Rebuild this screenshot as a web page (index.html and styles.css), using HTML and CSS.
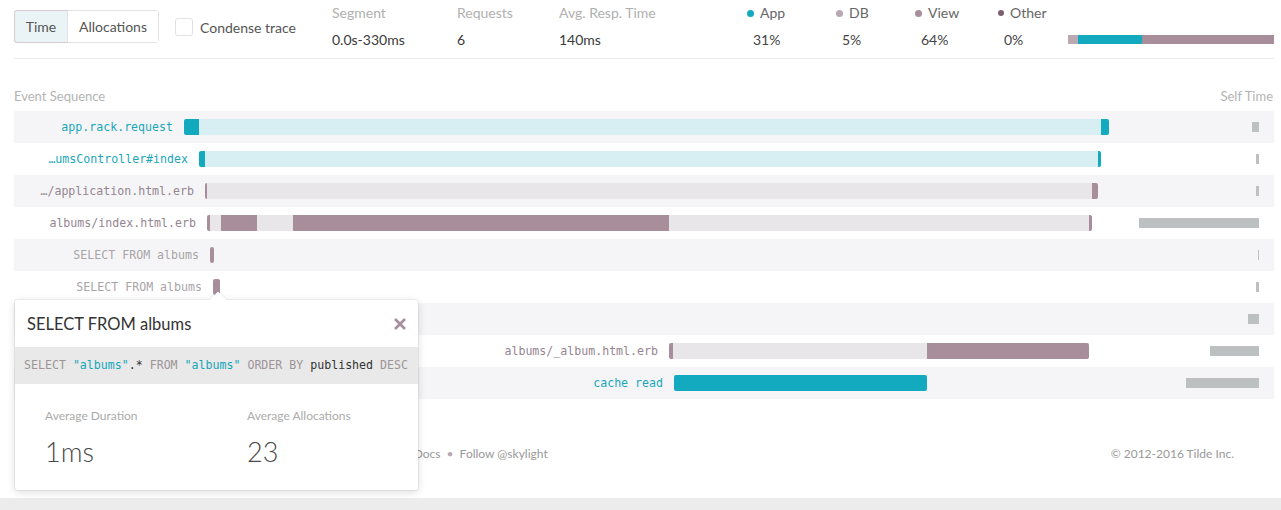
FILE: index.html
```html
<!DOCTYPE html>
<html>
<head>
<meta charset="utf-8">
<link rel="stylesheet" href="styles.css">
</head>
<body>
<div class="page">
  <div class="topbar">
    <div class="seg-group">
      <button class="seg active">Time</button>
      <button class="seg">Allocations</button>
    </div>
    <label class="condense"><span class="box"></span>Condense trace</label>
    <div class="stat w-seg"><div class="k">Segment</div><div class="v">0.0s-330ms</div></div>
    <div class="stat w-req"><div class="k">Requests</div><div class="v">6</div></div>
    <div class="stat w-avg"><div class="k">Avg. Resp. Time</div><div class="v">140ms</div></div>
    <div class="stat leg w-app"><div class="k"><i class="dot d-app"></i>App</div><div class="v">31%</div></div>
    <div class="stat leg w-db"><div class="k"><i class="dot d-db"></i>DB</div><div class="v">5%</div></div>
    <div class="stat leg w-view"><div class="k"><i class="dot d-view"></i>View</div><div class="v">64%</div></div>
    <div class="stat leg w-other"><div class="k"><i class="dot d-other"></i>Other</div><div class="v">0%</div></div>
    <div class="mix">
      <span class="mx db" style="width:10px"></span><span class="mx app" style="width:64px"></span><span class="mx view" style="width:132px"></span>
    </div>
  </div>

  <div class="seq-head"><span>Event Sequence</span><span>Self Time</span></div>

  <div class="rows">
    <div class="row alt">
      <div class="lbl c-app" style="width:170px">app.rack.request</div>
      <div class="bar"><span class="s app" style="width:15px"></span><span class="s app-l" style="width:902px"></span><span class="s app" style="width:8px"></span></div>
      <div class="self"><span class="sb" style="width:7px"></span></div>
    </div>
    <div class="row">
      <div class="lbl c-app" style="width:185px">…umsController#index</div>
      <div class="bar"><span class="s app" style="width:6px"></span><span class="s app-l" style="width:893px"></span><span class="s app" style="width:3px"></span></div>
      <div class="self"><span class="sb" style="width:3px"></span></div>
    </div>
    <div class="row alt">
      <div class="lbl c-view" style="width:191px">…/application.html.erb</div>
      <div class="bar"><span class="s view" style="width:2px"></span><span class="s view-l" style="width:885px"></span><span class="s view" style="width:6px"></span></div>
      <div class="self"><span class="sb" style="width:3px"></span></div>
    </div>
    <div class="row">
      <div class="lbl c-view" style="width:193px">albums/index.html.erb</div>
      <div class="bar"><span class="s view" style="width:3px"></span><span class="s view-l" style="width:11px"></span><span class="s view" style="width:36px"></span><span class="s view-l" style="width:36px"></span><span class="s view" style="width:376px"></span><span class="s view-l" style="width:420px"></span><span class="s view" style="width:3px"></span></div>
      <div class="self"><span class="sb" style="width:120px"></span></div>
    </div>
    <div class="row alt">
      <div class="lbl c-db" style="width:196px">SELECT FROM albums</div>
      <div class="bar"><span class="s view" style="width:4px"></span></div>
      <div class="self"><span class="sb" style="width:1px"></span></div>
    </div>
    <div class="row">
      <div class="lbl c-db" style="width:199px">SELECT FROM albums</div>
      <div class="bar"><span class="s view" style="width:7px"></span></div>
      <div class="self"><span class="sb" style="width:3px"></span></div>
    </div>
    <div class="row alt">
      <div class="lbl c-view" style="width:206px"></div>
      <div class="bar"><span class="s view" style="width:4px"></span></div>
      <div class="self"><span class="sb" style="width:11px"></span></div>
    </div>
    <div class="row">
      <div class="lbl c-view" style="width:655px">albums/_album.html.erb</div>
      <div class="bar"><span class="s view" style="width:4px"></span><span class="s view-l" style="width:254px"></span><span class="s view" style="width:162px"></span></div>
      <div class="self"><span class="sb" style="width:49px"></span></div>
    </div>
    <div class="row alt">
      <div class="lbl c-app" style="width:660px">cache read</div>
      <div class="bar"><span class="s app" style="width:253px"></span></div>
      <div class="self"><span class="sb" style="width:73px"></span></div>
    </div>
  </div>

  <div class="footer">
    <div class="links">Blog <b>•</b> Support <b>•</b> Docs <b>•</b> Follow @skylight</div>
    <div class="copy">© 2012-2016 Tilde Inc.</div>
  </div>

  <div class="popup">
    <div class="arrow"></div>
    <div class="p-head">
      <span class="p-title">SELECT FROM albums</span>
      <svg class="close" width="14" height="14" viewBox="0 0 14 14"><path d="M2 2 L12 12 M12 2 L2 12" stroke="#a88e9b" stroke-width="2.6" stroke-linecap="butt"/></svg>
    </div>
    <div class="sql"><span class="kw">SELECT</span> <span class="str">"albums"</span>.* <span class="kw">FROM</span> <span class="str">"albums"</span> <span class="kw">ORDER BY</span> published <span class="kw">DESC</span></div>
    <div class="p-stats">
      <div class="p-stat first"><div class="pk">Average Duration</div><div class="pv">1ms</div></div>
      <div class="p-stat"><div class="pk">Average Allocations</div><div class="pv">23</div></div>
    </div>
  </div>
</div>
<div class="band"></div>
</body>
</html>
```

FILE: styles.css
```css
* { box-sizing: border-box; }
html, body { margin: 0; padding: 0; background: #fff; }
body {
  font-family: Lato, "Noto Sans", sans-serif;
  font-size: 14px;
  color: #444;
  width: 1281px;
  height: 510px;
  overflow: hidden;
}
.page {
  position: relative;
  width: 1260px;
  margin-left: 14px;
  height: 498px;
}

/* top bar */
.topbar {
  display: flex;
  align-items: flex-start;
  height: 59px;
  border-bottom: 1px solid #ebebeb;
}
.seg-group {
  display: flex;
  margin-top: 10px;
  height: 33px;
  border: 1px solid #e3e3e3;
  border-radius: 3px;
}
.seg {
  font: inherit;
  font-size: 14px;
  color: #555;
  background: #fff;
  border: 0;
  height: 31px;
  padding: 0;
  margin: 0;
}
.seg:first-child { border-radius: 2px 0 0 2px; }
.seg.active {
  background: #eaf4f6;
  outline: 1px solid #d9c9d1;
  width: 52px;
}
.seg + .seg { border-left: 1px solid #e3e3e3; width: 91px; }
.condense {
  display: flex;
  align-items: center;
  margin-top: 18px;
  margin-left: 16px;
  height: 18px;
  color: #555;
  width: 157px;
}
.box {
  width: 18px;
  height: 18px;
  border: 1px solid #e1e1e1;
  border-radius: 3px;
  margin-right: 7px;
  background: #fff;
}
.stat { padding-top: 5px; }
.stat .k { height: 16px; line-height: 16px; color: #b0b0b0; white-space: nowrap; }
.stat .v { margin-top: 11px; height: 16px; line-height: 16px; color: #3a3a3a; }
.w-seg { width: 125px; }
.w-req { width: 102px; }
.w-avg { width: 188px; }
.leg .k { color: #666; display: flex; align-items: center; }
.leg .v { padding-left: 6px; color: #444; }
.w-app { width: 89px; }
.w-db { width: 79px; }
.w-view { width: 83px; }
.w-other { width: 70px; }
.dot {
  display: inline-block;
  width: 7px;
  height: 7px;
  border-radius: 50%;
  margin-right: 6px;
}
.d-app { background: #13a9be; }
.d-db { background: #b9a8b1; }
.d-view { background: #a88e9b; }
.d-other { background: #7a5f6c; width: 6px; height: 6px; }
.mix {
  display: flex;
  margin-top: 35px;
  height: 9px;
  width: 206px;
}
.mx { display: block; height: 9px; }
.mx.db { background: #b9a9b1; }
.mx.app { background: #13a9be; }
.mx.view { background: #a88e9b; }

/* sequence */
.seq-head {
  display: flex;
  justify-content: space-between;
  padding-top: 29px;
  padding-right: 1px;
  height: 52px;
  line-height: 16px;
  font-size: 13px;
  color: #b4b4b4;
}
.rows { display: flex; flex-direction: column; }
.row {
  display: flex;
  align-items: center;
  height: 32px;
}
.row.alt { background: #f5f5f7; }
.lbl {
  flex: 0 0 auto;
  text-align: right;
  padding-right: 11px;
  white-space: nowrap;
  font-family: "DejaVu Sans Mono", "Liberation Mono", monospace;
  font-size: 11.6px;
}
.c-app { color: #1aa6b9; }
.c-view { color: #948590; }
.c-db { color: #a9a4a8; }
.bar { display: flex; height: 16px; }
.s { display: block; height: 16px; }
.s:first-child { border-radius: 2px 0 0 2px; }
.s:last-child { border-radius: 0 2px 2px 0; }
.s:only-child { border-radius: 2px; }
.s.app { background: #13a9be; }
.s.app-l { background: #d7eff2; }
.s.view { background: #a88e9b; }
.s.view-l { background: #e8e6e8; }
.self {
  margin-left: auto;
  padding-right: 15px;
  display: flex;
}
.sb { display: block; height: 10px; background: #bdc0c1; }

/* footer */
.footer {
  display: flex;
  justify-content: space-between;
  padding-top: 47px;
  line-height: 16px;
  font-size: 12px;
  color: #999;
}
.links { padding-left: 296px; }
.links b { font-weight: normal; color: #b8a6b0; margin: 0 3px; }
.copy { padding-right: 40px; }
.band {
  height: 12px;
  background: #ececec;
}

/* popup */
.popup {
  position: absolute;
  left: 1px;
  top: 300px;
  width: 403px;
  height: 190px;
  background: #fff;
  border-radius: 3px;
  box-shadow: 0 0 0 1px rgba(0,0,0,0.05), 0 2px 8px rgba(0,0,0,0.14);
}
.arrow {
  position: absolute;
  left: 197px;
  top: -6px;
  width: 12px;
  height: 12px;
  background: #fff;
  transform: rotate(45deg);
  box-shadow: -1px -1px 2px rgba(0,0,0,0.06);
}
.p-head {
  position: relative;
  display: flex;
  align-items: center;
  justify-content: space-between;
  height: 47px;
  padding: 0 11px 0 12px;
  background: #fff;
  border-radius: 3px 3px 0 0;
}
.p-title { font-size: 16.5px; color: #333; }
.close { display: block; }
.sql {
  height: 37px;
  line-height: 37px;
  background: #e9e9e9;
  padding-left: 9px;
  white-space: nowrap;
  font-family: "DejaVu Sans Mono", "Liberation Mono", monospace;
  font-size: 11.6px;
  color: #333;
}
.sql .kw { color: #9d9498; }
.sql .str { color: #14a6ba; }
.p-stats {
  display: flex;
  padding: 25px 0 0 30px;
}
.p-stat { flex: 0 0 auto; }
.p-stat.first { width: 202px; }
.pk { font-size: 12px; line-height: 14px; color: #ababab; }
.pv {
  margin-top: 14px;
  font-size: 27px;
  line-height: 30px;
  font-weight: 300;
  color: #4a4a4a;
}
```
